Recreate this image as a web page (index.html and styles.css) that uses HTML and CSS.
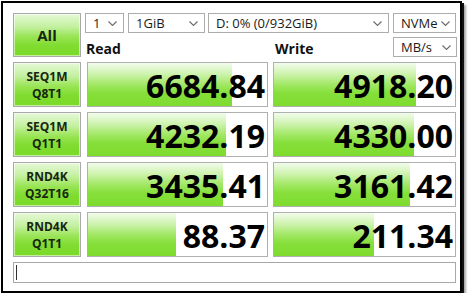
FILE: index.html
```html
<!DOCTYPE html>
<html>
<head>
<meta charset="utf-8">
<link rel="stylesheet" href="styles.css">
</head>
<body>
<div class="frame">
  <div class="grid">
    <div class="btn btn-all">All</div>
    <div class="header">
      <div class="selects">
        <div class="sel s-count"><span>1</span><svg class="chev" viewBox="0 0 9 5"><polyline points="0.5,0.5 4.5,4.5 8.5,0.5"/></svg></div>
        <div class="sel s-size"><span>1GiB</span><svg class="chev" viewBox="0 0 9 5"><polyline points="0.5,0.5 4.5,4.5 8.5,0.5"/></svg></div>
        <div class="sel s-drive"><span>D: 0% (0/932GiB)</span><svg class="chev" viewBox="0 0 9 5"><polyline points="0.5,0.5 4.5,4.5 8.5,0.5"/></svg></div>
        <div class="sel s-mode"><span>NVMe</span><svg class="chev" viewBox="0 0 9 5"><polyline points="0.5,0.5 4.5,4.5 8.5,0.5"/></svg></div>
      </div>
      <div class="labels">
        <div class="lbl">Read</div>
        <div class="lbl-w">
          <div class="lbl">Write</div>
          <div class="sel s-unit"><span>MB/s</span><svg class="chev" viewBox="0 0 9 5"><polyline points="0.5,0.5 4.5,4.5 8.5,0.5"/></svg></div>
        </div>
      </div>
    </div>

    <div class="btn btn-test">SEQ1M<br>Q8T1</div>
    <div class="cell"><div class="bar" style="width:80.4%"></div><span class="val">6684.84</span></div>
    <div class="cell"><div class="bar" style="width:78.2%"></div><span class="val">4918.20</span></div>

    <div class="btn btn-test">SEQ1M<br>Q1T1</div>
    <div class="cell"><div class="bar" style="width:77.1%"></div><span class="val">4232.19</span></div>
    <div class="cell"><div class="bar" style="width:77.3%"></div><span class="val">4330.00</span></div>

    <div class="btn btn-test">RND4K<br>Q32T16</div>
    <div class="cell"><div class="bar" style="width:75.6%"></div><span class="val">3435.41</span></div>
    <div class="cell"><div class="bar" style="width:75.0%"></div><span class="val">3161.42</span></div>

    <div class="btn btn-test">RND4K<br>Q1T1</div>
    <div class="cell"><div class="bar" style="width:49.1%"></div><span class="val">88.37</span></div>
    <div class="cell"><div class="bar" style="width:55.4%"></div><span class="val">211.34</span></div>

    <div class="status"><div class="caret"></div></div>
  </div>
</div>
</body>
</html>
```
FILE: styles.css
```css
html, body {
  margin: 0;
  padding: 0;
  background: #ffffff;
}
body {
  font-family: "Open Sans", "Noto Sans", sans-serif;
  color: #111;
}
.frame {
  margin: 1px 0 0 1px;
  width: 457px;
  height: 288px;
  border: 2px solid #000;
  background: #fff;
  box-shadow: 2px 2px 0 #111, 4px 4px 2px rgba(0,0,0,0.35);
  padding: 10px 3px 0 10px;
  box-sizing: content-box;
}
.frame {
  width: 444px;
  height: 278px;
}
.grid {
  display: grid;
  grid-template-columns: 68px 182px 183px;
  column-gap: 5px;
  grid-template-rows: 44px 45px 45px 45px 45px 21px;
  row-gap: 5px;
}
.grid > .cell:nth-child(3n+1) { margin-left: 1px; }
.btn {
  box-sizing: border-box;
  border: 1px solid #a9a9a9;
  background: linear-gradient(#e6f9d8 0%, #c4f0a0 30%, #98e454 55%, #80dc30 75%, #7ada28 100%);
  box-shadow: inset 0 0 0 1px rgba(255,255,255,0.55);
  display: flex;
  align-items: center;
  justify-content: center;
  text-align: center;
  font-weight: 700;
  color: #17260e;
}
.btn-all {
  font-size: 15px;
}
.btn-test {
  font-size: 12px;
  line-height: 17px;
  padding-top: 1px;
}
.header {
  grid-column: 2 / 4;
  display: flex;
  flex-direction: column;
  gap: 4px;
}
.selects {
  display: flex;
  height: 20px;
  margin-left: -1px;
}
.sel {
  box-sizing: border-box;
  height: 20px;
  border: 1px solid #acacac;
  background: #fff;
  display: flex;
  align-items: center;
  justify-content: space-between;
  padding: 0 6px 0 7px;
  font-size: 13px;
  color: #1a1a1a;
}
.sel span { line-height: 18px; }
.chev {
  width: 9px;
  height: 5px;
  fill: none;
  stroke: #6a6a6a;
  stroke-width: 1.1;
  flex: none;
}
.s-count { width: 39px; margin-right: 4px; }
.s-size { width: 77px; margin-right: 3px; }
.s-drive { width: 181px; margin-right: 4px; }
.s-mode { width: 63px; padding-right: 5px; }
.s-unit { width: 64px; padding-right: 5px; }
.labels {
  display: grid;
  grid-template-columns: 182px 183px;
  column-gap: 6px;
  height: 20px;
}
.lbl {
  font-weight: 700;
  font-size: 14px;
  line-height: 20px;
  padding-top: 2px;
}
.lbl-w {
  display: flex;
  justify-content: space-between;
  padding-left: 1px;
}
.cell {
  position: relative;
  box-sizing: border-box;
  border: 1px solid #b0b0b0;
  background: #fff;
  display: flex;
  align-items: center;
  justify-content: flex-end;
  overflow: hidden;
}
.bar {
  position: absolute;
  left: 0;
  top: 0;
  bottom: 0;
  background: linear-gradient(#f2fcec 0%, #cff3b0 25%, #a2e866 50%, #86df3a 70%, #7edc2e 100%);
}
.val {
  position: relative;
  font-weight: 700;
  font-size: 32px;
  line-height: 40px;
  padding-right: 2px;
  color: #000;
  margin-top: 2px;
}
.status {
  grid-column: 1 / 4;
  box-sizing: border-box;
  border: 1px solid #a8a8a8;
  background: #fff;
  display: flex;
  align-items: center;
  padding-left: 2px;
}
.caret {
  width: 1px;
  height: 15px;
  background: #333;
}
```
